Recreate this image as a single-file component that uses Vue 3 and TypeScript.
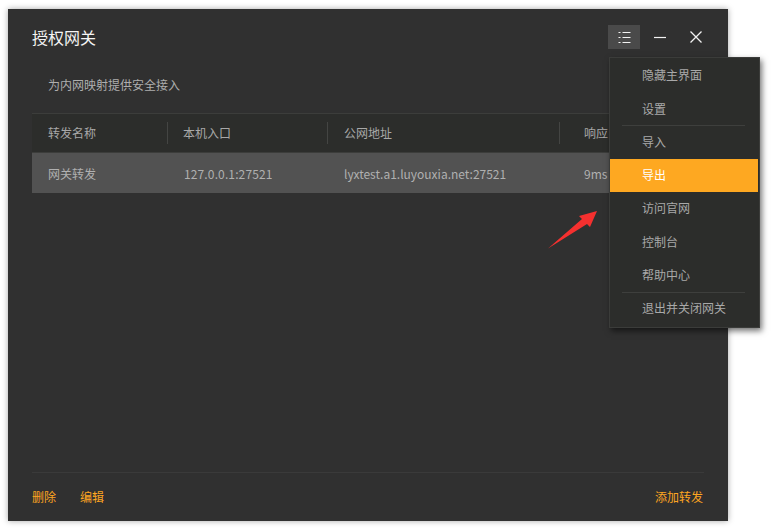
<script setup lang="ts">
interface MenuItem { label: string; active?: boolean; divider?: boolean }
const menu: MenuItem[] = [
  { label: '隐藏主界面' },
  { label: '设置', divider: true },
  { label: '导入' },
  { label: '导出', active: true },
  { label: '访问官网' },
  { label: '控制台' },
  { label: '帮助中心', divider: true },
  { label: '退出并关闭网关' },
]
</script>

<template>
  <div class="page">
    <div class="window">
      <header class="titlebar">
        <h1 class="title">授权网关</h1>
        <div class="controls">
          <button class="ctrl ctrl-menu" aria-label="菜单">
            <svg width="13" height="11" viewBox="0 0 13 11" fill="none" stroke="#f2f2f2" stroke-width="1">
              <path d="M0.500 0.500h2M4.500 0.500h8M0.500 5.500h2M4.500 5.500h8M0.500 10.500h2M4.500 10.500h8" />
            </svg>
          </button>
          <button class="ctrl ctrl-min" aria-label="最小化">
            <svg width="14" height="14" viewBox="0 0 14 14" fill="none" stroke="#f2f2f2" stroke-width="1.2">
              <path d="M1 7.500h12" />
            </svg>
          </button>
          <button class="ctrl ctrl-close" aria-label="关闭">
            <svg width="14" height="14" viewBox="0 0 14 14" fill="none" stroke="#f2f2f2" stroke-width="1.3">
              <path d="M1.500 1.500l11 11M12.500 1.500l-11 11" />
            </svg>
          </button>
        </div>
      </header>

      <p class="subtitle">为内网映射提供安全接入</p>

      <div class="table">
        <div class="row head">
          <div class="cell c1"><span>转发名称</span></div>
          <div class="cell c2"><span>本机入口</span></div>
          <div class="cell c3"><span>公网地址</span></div>
          <div class="cell c4"><span>响应</span></div>
        </div>
        <div class="row body">
          <div class="cell c1"><span>网关转发</span></div>
          <div class="cell c2 num"><span>127.0.0.1:27521</span></div>
          <div class="cell c3"><span>lyxtest.a1.luyouxia.net:27521</span></div>
          <div class="cell c4"><span>9ms</span></div>
        </div>
      </div>

      <footer class="footer">
        <div class="footer-left">
          <a class="link">删除</a>
          <a class="link">编辑</a>
        </div>
        <a class="link link-add">添加转发</a>
      </footer>

      <svg class="arrow" width="52" height="40" viewBox="0 0 52 40">
        <path d="M1 38.500 L35 9 L32 6 L50 1 L43 17 L40 14 Z" fill="#f5302f" />
      </svg>
    </div>

    <nav class="menu">
      <template v-for="item in menu" :key="item.label">
        <div class="menu-item" :class="{ active: item.active }">{{ item.label }}</div>
        <div v-if="item.divider" class="menu-divider"></div>
      </template>
    </nav>
  </div>
</template>

<style scoped>
.page {
  position: relative;
  width: 771px;
  height: 530px;
  padding: 9px 0 0 8px;
  box-sizing: border-box;
  background: #fff;
  overflow: hidden;
  font-family: "Noto Sans CJK SC", "Liberation Sans", sans-serif;
  font-size: 12px;
}
.window {
  position: relative;
  width: 720px;
  height: 512px;
  background: #303030;
  box-shadow: 0 0 6px rgba(0, 0, 0, 0.35);
  display: flex;
  flex-direction: column;
  padding: 0 24px;
  box-sizing: border-box;
}
.titlebar {
  height: 56px;
  display: flex;
  align-items: center;
  justify-content: space-between;
  flex: none;
}
.title {
  margin: 0;
  font-size: 16px;
  font-weight: 400;
  color: #f4f4f4;
  line-height: 56px;
}
.controls {
  display: flex;
  align-items: center;
  margin-right: -24px;
  padding-right: 16px;
}
.ctrl {
  border: 0;
  padding: 0;
  background: transparent;
  width: 32px;
  height: 24px;
  display: flex;
  align-items: center;
  justify-content: center;
  margin-left: 4px;
}
.ctrl-menu { background: #4a4a4a; }
.subtitle {
  margin: 0;
  padding: 12px 0 0 16px;
  height: 48px;
  box-sizing: border-box;
  line-height: 16px;
  color: #aeaeae;
  flex: none;
}
.table {
  flex: none;
  border-top: 1px solid #3c3d3b;
}
.row { display: flex; }
.head {
  height: 38px;
  background: #2c2d2b;
  border-bottom: 1px solid #3c3d3b;
  color: #a8a8a8;
}
.head .cell { padding-bottom: 1px; }
.body {
  height: 40px;
  background: #525252;
  color: #b0b0b0;
}
.cell {
  display: flex;
  align-items: center;
  box-sizing: border-box;
  position: relative;
  white-space: nowrap;
}
.head .cell + .cell::before {
  content: "";
  position: absolute;
  left: 0;
  top: 8px;
  height: 22px;
  width: 1px;
  background: #444543;
}
.c1 { width: 135px; padding-left: 16px; }
.c2 { width: 160px; padding-left: 16px; }
.c3 { width: 232px; padding-left: 17px; }
.c4 { flex: 1; padding-left: 25px; }
.num { padding-left: 17px; letter-spacing: 0.13px; }
.footer {
  margin-top: auto;
  height: 49px;
  flex: none;
  box-sizing: border-box;
  border-top: 1px solid #3a3a3a;
  display: flex;
  align-items: center;
  justify-content: space-between;
  padding-bottom: 1px;
}
.footer-left { display: flex; gap: 24px; }
.link { color: #fea621; line-height: 16px; }
.link-add { margin-right: 1px; }
.arrow {
  position: absolute;
  left: 539px;
  top: 201px;
}
.menu {
  position: absolute;
  left: 609px;
  top: 57px;
  width: 151px;
  height: 271px;
  box-sizing: border-box;
  background: #2c2d2b;
  border: 1px solid #3b3c3a;
  padding: 1.4px 1px 0 0;
  box-shadow: 2px 3px 6px rgba(0, 0, 0, 0.55);
  color: #a9a9a9;
}
.menu-item {
  height: 33.25px;
  line-height: 32px;
  padding-left: 32px;
  white-space: nowrap;
}
.menu-item.active {
  background: #fea821;
  color: #fff;
}
.menu-divider {
  height: 1px;
  margin: -0.5px 13px -0.5px 12px;
  background: #3e3f3d;
}
</style>

<style>
html, body { margin: 0; background: #fff; }
</style>
